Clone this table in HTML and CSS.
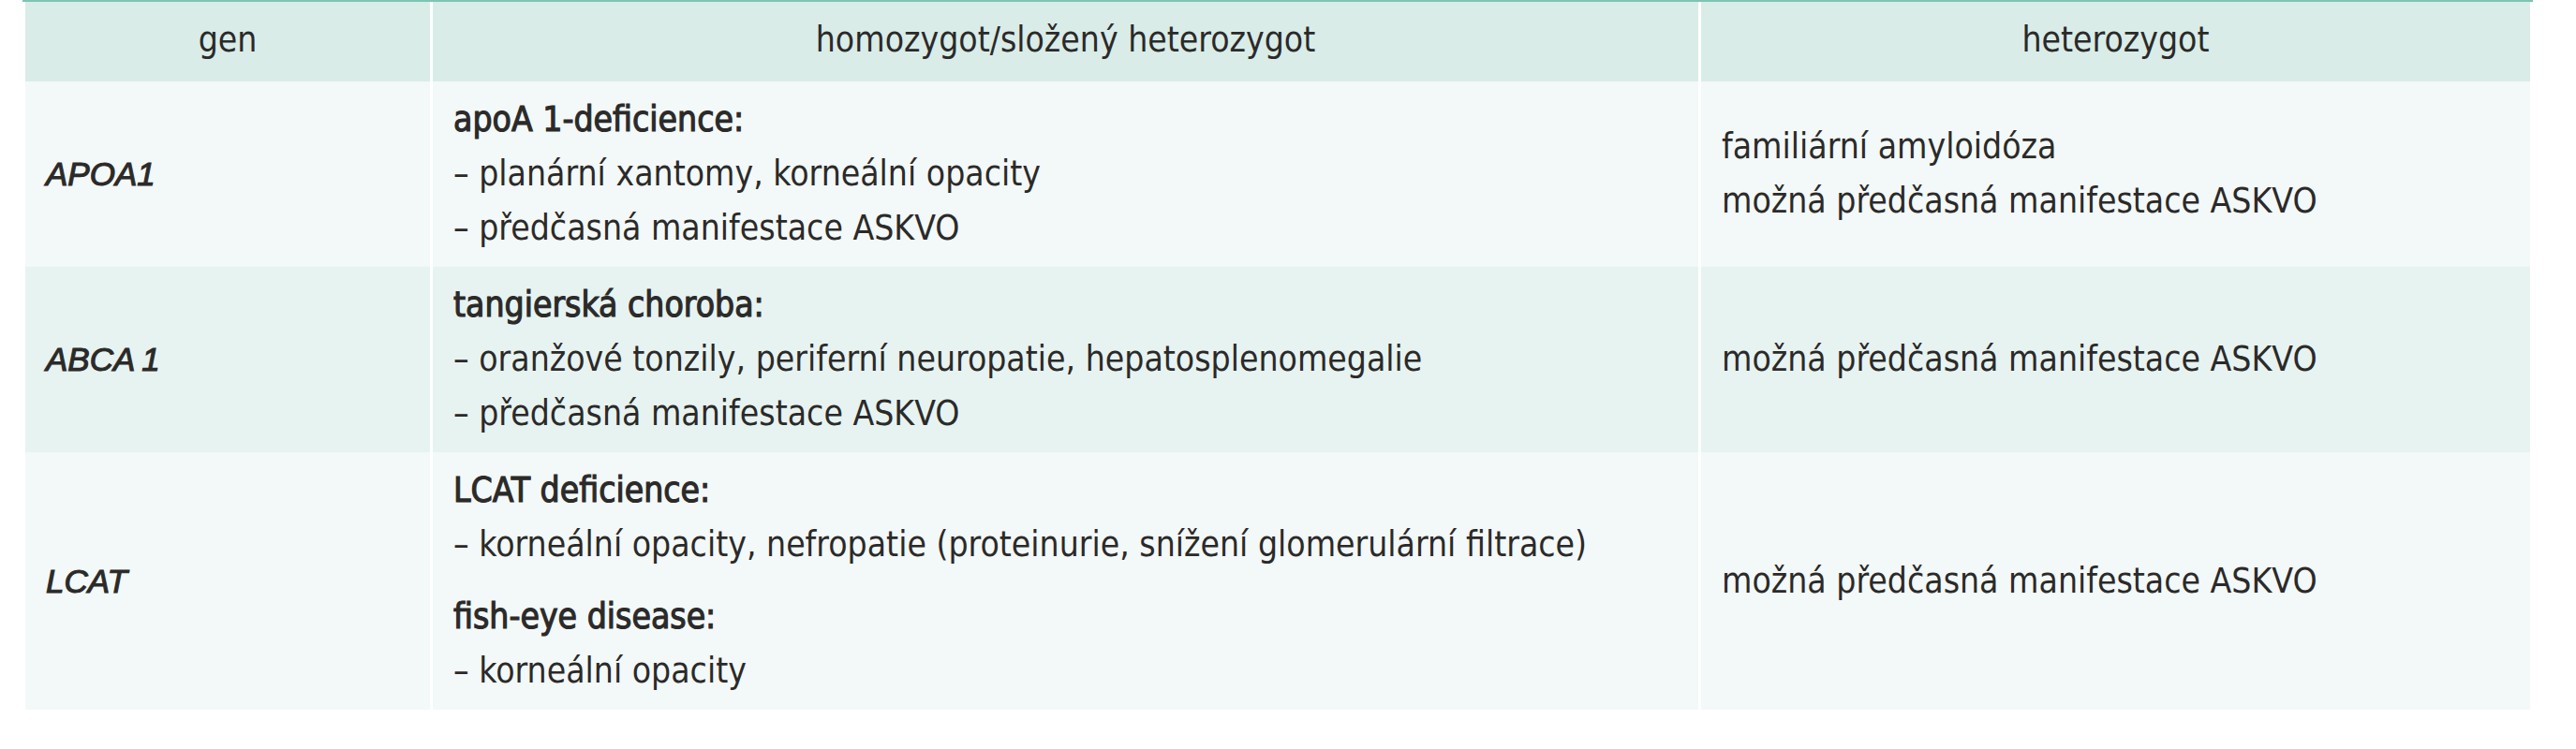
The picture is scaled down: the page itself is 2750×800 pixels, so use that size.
FILE: index.html
```html
<!DOCTYPE html>
<html lang="cs">
<head>
<meta charset="utf-8">
<title>Tabulka</title>
<link rel="stylesheet" href="styles.css">
</head>
<body>
<div class="table">
  <div class="cell head">gen</div>
  <div class="cell head">homozygot/složený heterozygot</div>
  <div class="cell head">heterozygot</div>

  <div class="cell gene odd"><span>APOA1</span></div>
  <div class="cell desc odd">
    <div class="group">
      <div class="title">apoA 1-deficience:</div>
      <div>– planární xantomy, korneální opacity</div>
      <div>– předčasná manifestace ASKVO</div>
    </div>
  </div>
  <div class="cell het odd">
    <div>familiární amyloidóza</div>
    <div>možná předčasná manifestace ASKVO</div>
  </div>

  <div class="cell gene even"><span>ABCA&#8201;1</span></div>
  <div class="cell desc even">
    <div class="group">
      <div class="title">tangierská choroba:</div>
      <div>– oranžové tonzily, periferní neuropatie, hepatosplenomegalie</div>
      <div>– předčasná manifestace ASKVO</div>
    </div>
  </div>
  <div class="cell het even">
    <div>možná předčasná manifestace ASKVO</div>
  </div>

  <div class="cell gene odd"><span>LCAT</span></div>
  <div class="cell desc odd">
    <div class="group">
      <div class="title">LCAT deficience:</div>
      <div>– korneální opacity, nefropatie (proteinurie, snížení glomerulární filtrace)</div>
    </div>
    <div class="group">
      <div class="title">fish-eye disease:</div>
      <div>– korneální opacity</div>
    </div>
  </div>
  <div class="cell het odd">
    <div>možná předčasná manifestace ASKVO</div>
  </div>
</div>
</body>
</html>
```

FILE: styles.css
```css
html, body {
  margin: 0;
  padding: 0;
  background: #ffffff;
}

body {
  font-family: "DejaVu Sans Condensed", "DejaVu Sans", sans-serif;
  font-size: 37px;
  line-height: 58px;
  color: #2b2a29;
}

.table {
  margin-left: 24px;
  width: 2680px;
  box-sizing: border-box;
  border-top: 2px solid #7dc4b4;
  padding: 0 3px;
  display: grid;
  grid-template-columns: 432px 1351px 885px;
  column-gap: 3px;
}

.cell {
  padding: 12px 22px;
}

.head {
  background: #d9ece8;
  text-align: center;
  padding-top: 12px;
  padding-bottom: 15px;
}

.odd {
  background: #f3f8f8;
}

.even {
  background: #e7f3f1;
}

.gene {
  display: flex;
  align-items: center;
  font-family: "Liberation Sans", Arial, sans-serif;
  font-size: 35px;
  font-style: italic;
  -webkit-text-stroke: 1.1px #2b2a29;
}

.het {
  display: flex;
  flex-direction: column;
  justify-content: center;
}

.group + .group {
  margin-top: 19px;
}

.title {
  -webkit-text-stroke: 1.1px #2b2a29;
}
```
